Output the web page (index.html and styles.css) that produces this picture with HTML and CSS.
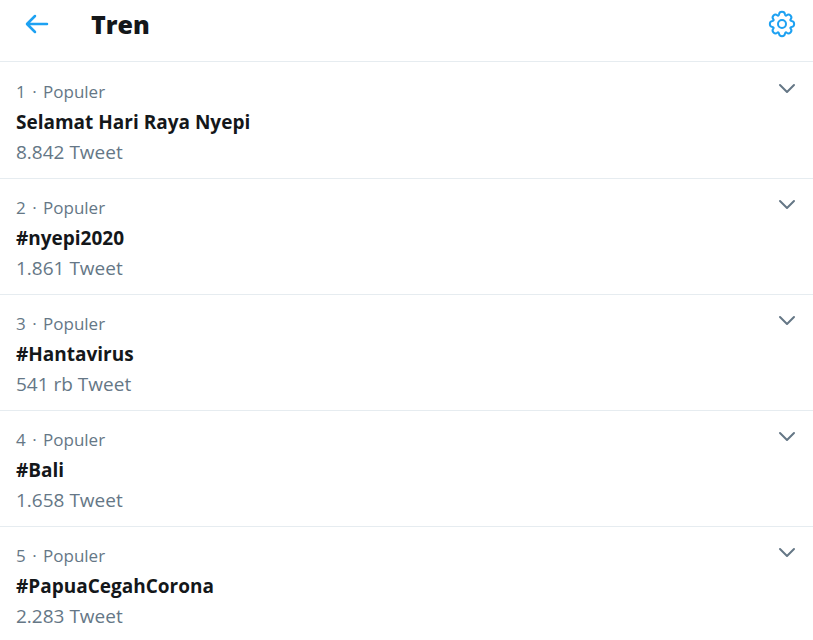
FILE: index.html
```html
<!DOCTYPE html>
<html lang="id">
<head>
    <meta charset="UTF-8">
    <meta name="viewport" content="width=device-width, initial-scale=1.0">
    <title>Tren</title>
    <link rel="stylesheet" href="styles.css">
</head>
<body>
    <!-- Icon shapes shared by the rows -->
    <svg class="sprite" aria-hidden="true">
        <symbol id="chevron" viewBox="0 0 18 12">
            <path d="M2 2 L9 9 L16 2"/>
        </symbol>
    </svg>

    <header class="topbar">
        <button class="icon-button back" aria-label="Kembali">
            <svg width="24" height="20" viewBox="0 0 24 20">
                <path d="M22 10 H3 M10 2 L2 10 L10 18"/>
            </svg>
        </button>
        <h1>Tren</h1>
        <button class="icon-button settings" aria-label="Pengaturan">
            <svg width="28" height="28" viewBox="0 0 28 28">
                <path d="M11 4.400 C11.400 1 16.600 1 17 4.400 C17.200 5.800 18 6 18.700 5.300 C21.400 3.200 24.800 6.600 22.700 9.300 C22 10 22.200 10.800 23.600 11 C27 11.400 27 16.600 23.600 17 C22.200 17.200 22 18 22.700 18.700 C24.800 21.400 21.400 24.800 18.700 22.700 C18 22 17.200 22.200 17 23.600 C16.600 27 11.400 27 11 23.600 C10.800 22.200 10 22 9.300 22.700 C6.600 24.800 3.200 21.400 5.300 18.700 C6 18 5.800 17.200 4.400 17 C1 16.600 1 11.400 4.400 11 C5.800 10.800 6 10 5.300 9.300 C3.200 6.600 6.600 3.200 9.300 5.300 C10 6 10.800 5.800 11 4.400 Z"/>
                <circle cx="14" cy="14" r="4"/>
            </svg>
        </button>
    </header>

    <main class="trends">
        <article class="trend">
            <div class="trend-text">
                <p class="meta">1 <span class="dot">·</span> Populer</p>
                <h2>Selamat Hari Raya Nyepi</h2>
                <p class="count">8.842 Tweet</p>
            </div>
            <button class="icon-button more" aria-label="Lainnya"><svg width="18" height="12"><use href="#chevron"/></svg></button>
        </article>
        <article class="trend">
            <div class="trend-text">
                <p class="meta">2 <span class="dot">·</span> Populer</p>
                <h2>#nyepi2020</h2>
                <p class="count">1.861 Tweet</p>
            </div>
            <button class="icon-button more" aria-label="Lainnya"><svg width="18" height="12"><use href="#chevron"/></svg></button>
        </article>
        <article class="trend">
            <div class="trend-text">
                <p class="meta">3 <span class="dot">·</span> Populer</p>
                <h2>#Hantavirus</h2>
                <p class="count">541 rb Tweet</p>
            </div>
            <button class="icon-button more" aria-label="Lainnya"><svg width="18" height="12"><use href="#chevron"/></svg></button>
        </article>
        <article class="trend">
            <div class="trend-text">
                <p class="meta">4 <span class="dot">·</span> Populer</p>
                <h2>#Bali</h2>
                <p class="count">1.658 Tweet</p>
            </div>
            <button class="icon-button more" aria-label="Lainnya"><svg width="18" height="12"><use href="#chevron"/></svg></button>
        </article>
        <article class="trend">
            <div class="trend-text">
                <p class="meta">5 <span class="dot">·</span> Populer</p>
                <h2>#PapuaCegahCorona</h2>
                <p class="count">2.283 Tweet</p>
            </div>
            <button class="icon-button more" aria-label="Lainnya"><svg width="18" height="12"><use href="#chevron"/></svg></button>
        </article>
    </main>
</body>
</html>
```
FILE: styles.css
```css
* {
    box-sizing: border-box;
}
body {
    margin: 0;
    font-family: "Segoe UI", "Open Sans", "Noto Sans", sans-serif;
    background-color: #fff;
    color: #14171a;
}
h1, h2, p {
    margin: 0;
}
.sprite {
    display: none;
}
.topbar {
    display: flex;
    align-items: center;
    height: 62px;
    padding: 0 17px 14px 25px;
    border-bottom: 1px solid #e6ecf0;
}
.topbar h1 {
    flex: 1;
    margin-left: 42px;
    font-size: 25px;
    font-weight: 800;
    line-height: 32px;
}
.icon-button {
    display: flex;
    padding: 0;
    border: none;
    background: none;
    color: #1da1f2;
    cursor: pointer;
}
.icon-button svg {
    fill: none;
    stroke: currentColor;
    stroke-width: 2;
    stroke-linecap: round;
    stroke-linejoin: round;
}
.icon-button.back svg {
    stroke-width: 2.5;
}
.trends {
    padding-top: 1px;
}
.trend {
    display: flex;
    justify-content: space-between;
    align-items: flex-start;
    padding: 14px 17px 11px 16px;
    border-bottom: 1px solid #e6ecf0;
}
.trend:last-child {
    padding-bottom: 0;
    border-bottom: none;
}
.trend h2 {
    font-size: 19px;
    font-weight: 700;
    line-height: 30px;
}
.meta,
.count {
    color: #657786;
    line-height: 30px;
}
.meta {
    font-size: 17px;
}
.dot {
    margin: 0 2px;
}
.count {
    font-size: 19px;
}
.icon-button.more {
    margin-top: 6px;
    color: #657786;
}
```
